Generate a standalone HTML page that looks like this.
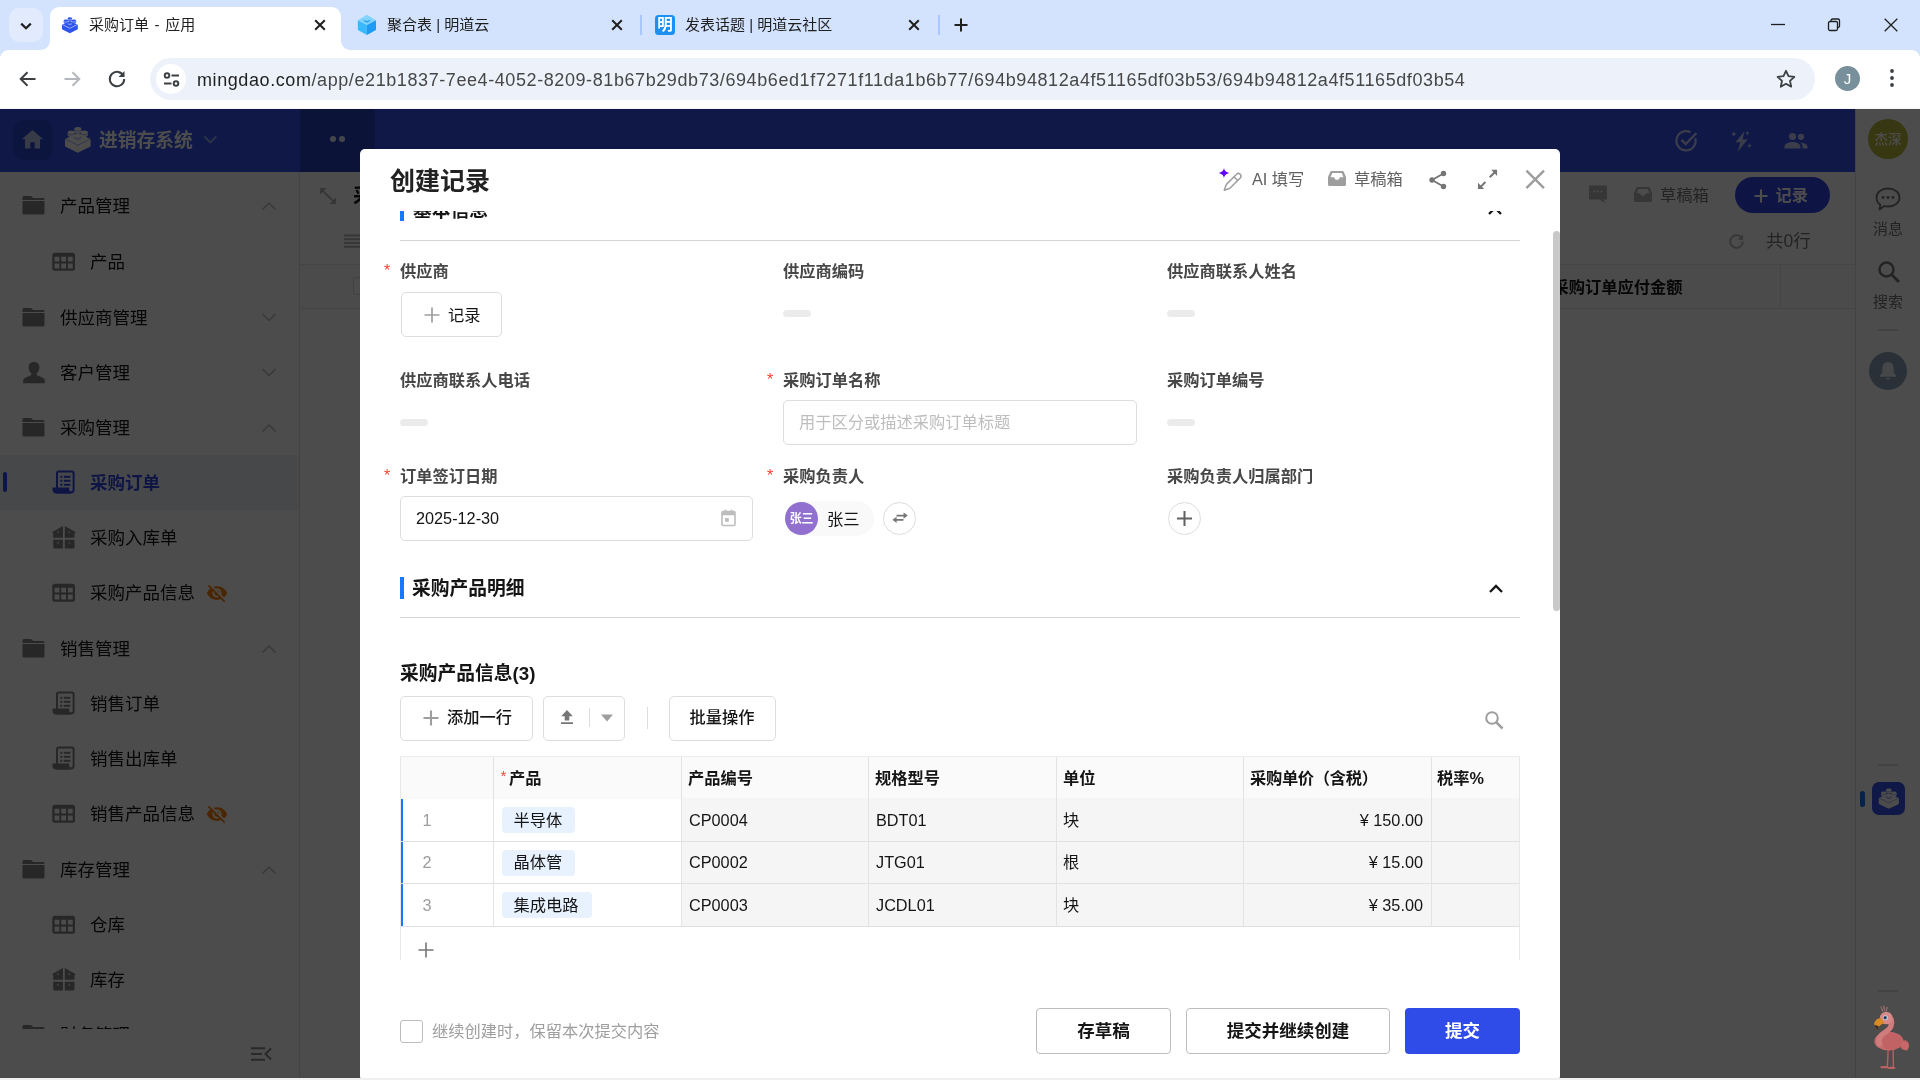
<!DOCTYPE html>
<html lang="zh-CN">
<head>
<meta charset="utf-8">
<title>采购订单 - 应用</title>
<style>
*{box-sizing:border-box;margin:0;padding:0}
html,body{width:1920px;height:1080px;overflow:hidden;background:#f0f0f0}
body{font-family:"Liberation Sans","Noto Sans CJK SC",sans-serif;color:#151515;position:relative}
.abs{position:absolute}
svg{display:block}
/* ---------- browser chrome ---------- */
#tabstrip,#toolbar,#app,#modal{will-change:transform}
#tabstrip{position:absolute;left:0;top:0;width:1920px;height:50px;background:#d3e3fd}
#toolbar{position:absolute;left:0;top:50px;width:1920px;height:58px;background:#fff}
.tabtitle{position:absolute;top:14px;font-size:15px;line-height:22px;color:#1f1f1f;white-space:nowrap}
#omni{position:absolute;left:150px;top:8px;width:1665px;height:42px;border-radius:21px;background:#edf2fa}
#url{position:absolute;left:47px;top:10px;font-size:18px;line-height:24px;color:#1f1f1f;white-space:nowrap;letter-spacing:.585px}
/* ---------- app ---------- */
#app{position:absolute;left:0;top:108px;width:1920px;height:970px;background:#fff;overflow:hidden}
#mask{position:absolute;left:0;top:108px;width:1920px;height:970px;background:rgba(0,0,0,.7)}
#hdr{position:absolute;left:0;top:0;width:1855px;height:64px;background:#3253ea}
#side{position:absolute;left:0;top:64px;width:300px;height:906px;background:#fff;border-right:1px solid #e2e2e2}
.nav{position:absolute;left:0;width:299px;height:55px;font-size:17.5px;line-height:55px;color:#151515;white-space:nowrap}
.nav .t{position:absolute;left:60px;top:1px}
.nav.sub .t{left:90px}
.nav .ic{position:absolute;left:22px;top:16px}
.nav.sub .ic{left:52px}
.nav .chev{position:absolute;left:261px;top:20px}
#rside{position:absolute;left:1855px;top:0;width:65px;height:970px;background:#fff;border-left:1px solid #e0e0e0}
/* ---------- modal ---------- */
#modal{position:absolute;left:360px;top:149px;width:1200px;height:929px;background:#fff;border-radius:5px 5px 1px 1px;overflow:hidden}
.lbl{position:absolute;font-size:16.25px;line-height:24px;font-weight:700;color:#474747;white-space:nowrap}
.req{position:absolute;color:#f44336;font-size:16px;line-height:24px;font-weight:400}
.pill{position:absolute;width:28px;height:7px;border-radius:4px;background:#ebebeb}
.box{position:absolute;border:1px solid #ddd;border-radius:5px;background:#fff}
</style>
</head>
<body>
<!-- ================= BROWSER CHROME ================= -->
<div id="tabstrip">
  <div class="abs" style="left:8.500px;top:8px;width:34px;height:34px;border-radius:10px;background:#e1ebfd"></div>
  <svg class="abs" style="left:17px;top:17px" width="18" height="18" viewBox="0 0 18 18"><path d="M4.2 6.6 9 11.2l4.8-4.6" fill="none" stroke="#1f1f1f" stroke-width="2.2"/></svg>
  <!-- active tab -->
  <svg class="abs" style="left:40px;top:7px" width="312" height="43" viewBox="0 0 312 43"><path d="M0 43c6 0 10-4 10-10V10C10 4 14 0 20 0h271c6 0 10 4 10 10v23c0 6 4 10 10 10z" fill="#fff"/></svg>
  <svg class="abs" style="left:61px;top:16px" width="18" height="18" viewBox="0 0 28 29"><path d="M13.800 8 26.600 14v7.500L13.800 27.800 1 21.500V14z" fill="#2f54eb"/><g fill="#2f54eb"><path d="M10.200 3.900a3.600 1.900 0 0 1 7.200 0v2.600a3.600 1.900 0 0 1-7.200 0z"/><path d="M3.700 7.500a3.600 1.900 0 0 1 7.200 0v2.600a3.600 1.900 0 0 1-7.200 0z"/><path d="M16.700 7.500a3.600 1.900 0 0 1 7.200 0v2.600a3.600 1.900 0 0 1-7.200 0z"/><path d="M10.200 11a3.600 1.900 0 0 1 7.200 0v2.600a3.600 1.900 0 0 1-7.200 0z"/></g><g fill="none" stroke="#fff" stroke-width="1.100" opacity=".75"><path d="M1.800 13.800 13.800 19.800 25.800 13.800"/><path d="M10.400 5a3.600 1.900 0 0 0 6.800 0"/><path d="M3.900 8.600a3.600 1.900 0 0 0 6.800 0"/><path d="M16.900 8.600a3.600 1.900 0 0 0 6.800 0"/><path d="M10.400 12.100a3.600 1.900 0 0 0 6.800 0"/></g></svg>
  <div class="tabtitle" style="left:89px;word-spacing:1.400px">采购订单 - 应用</div>
  <svg class="abs" style="left:312px;top:17px" width="16" height="16" viewBox="0 0 16 16"><path d="M3.200 3.200l9.600 9.600M12.800 3.200l-9.600 9.600" stroke="#1f1f1f" stroke-width="2"/></svg>
  <!-- tab 2 -->
  <svg class="abs" style="left:357px;top:14px" width="20" height="22" viewBox="0 0 20 22"><path d="M9.900.8 19 6.200 9.900 11 .900 6.200z" fill="#82d4ff"/><path d="M.900 6.200 9.900 11v10L.900 16z" fill="#3bb8fe"/><path d="M19 6.200 9.900 11v10L19 16z" fill="#1f9bf4"/><path d="M6.400 5.600c.3 1.700 1.700 2.900 3.500 2.900s3.200-1.200 3.500-2.900c-.9.900-2.100 1.400-3.500 1.400s-2.600-.5-3.500-1.400z" fill="#1f9bf4"/></svg>
  <div class="tabtitle" style="left:387px">聚合表 | 明道云</div>
  <svg class="abs" style="left:609px;top:17px" width="16" height="16" viewBox="0 0 16 16"><path d="M3.200 3.200l9.600 9.600M12.800 3.200l-9.600 9.600" stroke="#1f1f1f" stroke-width="2"/></svg>
  <div class="abs" style="left:640px;top:15px;width:2px;height:20px;background:#a8c7fa"></div>
  <!-- tab 3 -->
  <div class="abs" style="left:655px;top:15px;width:20px;height:20px;border-radius:3.500px;background:#1e90f0;color:#fff;font-size:15.500px;line-height:20px;font-weight:700;text-align:center">明</div>
  <div class="tabtitle" style="left:685px">发表话题 | 明道云社区</div>
  <svg class="abs" style="left:906px;top:17px" width="16" height="16" viewBox="0 0 16 16"><path d="M3.200 3.200l9.600 9.600M12.800 3.200l-9.600 9.600" stroke="#1f1f1f" stroke-width="2"/></svg>
  <div class="abs" style="left:938px;top:15px;width:2px;height:20px;background:#a8c7fa"></div>
  <svg class="abs" style="left:952px;top:16px" width="18" height="18" viewBox="0 0 18 18"><path d="M9 2.500v13M2.500 9h13" stroke="#1f1f1f" stroke-width="2"/></svg>
  <!-- window controls -->
  <svg class="abs" style="left:1768px;top:14.500px" width="20" height="20" viewBox="0 0 20 20"><path d="M3 9.500h14" stroke="#1f1f1f" stroke-width="1.300"/></svg>
  <svg class="abs" style="left:1823.500px;top:14.700px" width="20" height="20" viewBox="0 0 20 20"><rect x="4.500" y="6.500" width="9" height="9" rx="1.500" fill="none" stroke="#1f1f1f" stroke-width="1.300"/><path d="M7 6.500V5.500c0-.8.700-1.500 1.500-1.500H14c.800 0 1.500.700 1.500 1.500V11c0 .8-.7 1.500-1.500 1.500h-.5" fill="none" stroke="#1f1f1f" stroke-width="1.300"/></svg>
  <svg class="abs" style="left:1881.300px;top:14.600px" width="20" height="20" viewBox="0 0 20 20"><path d="M3.700 3.700l12.600 12.600M16.300 3.700l-12.600 12.600" stroke="#1f1f1f" stroke-width="1.300"/></svg>
</div>
<div id="toolbar">
  <div class="abs" style="left:0;top:0;width:8px;height:8px;background:radial-gradient(circle at 100% 100%,#fff 7.500px,#d3e3fd 8px)"></div>
  <div class="abs" style="left:1912px;top:0;width:8px;height:8px;background:radial-gradient(circle at 0 100%,#fff 7.500px,#d3e3fd 8px)"></div>
  <svg class="abs" style="left:16px;top:17px" width="24" height="24" viewBox="0 0 24 24"><path d="M19.500 12H5M11.500 5.200 4.700 12l6.800 6.800" fill="none" stroke="#3c4043" stroke-width="2"/></svg>
  <svg class="abs" style="left:60px;top:17px" width="24" height="24" viewBox="0 0 24 24"><path d="M4.500 12H19M12.500 5.200 19.300 12l-6.800 6.800" fill="none" stroke="#b4b7bb" stroke-width="2"/></svg>
  <svg class="abs" style="left:105px;top:17px" width="24" height="24" viewBox="0 0 24 24"><path d="M18.600 9.200A7.200 7.200 0 1 0 19.200 12" fill="none" stroke="#3c4043" stroke-width="2"/><path d="M19.500 4v6h-6z" fill="#3c4043"/></svg>
  <div id="omni">
    <div class="abs" style="left:6px;top:6px;width:30px;height:30px;border-radius:50%;background:#fff"></div>
    <svg class="abs" style="left:10.500px;top:11px" width="21" height="21" viewBox="0 0 21 21"><g fill="none" stroke="#3c4043" stroke-width="1.900"><circle cx="6" cy="6.500" r="2.300"/><path d="M10.500 6.500H18M3 14.500h7.500"/><circle cx="15" cy="14.500" r="2.300"/></g></svg>
    <div id="url">mingdao.com<span style="color:#474747">/app/e21b1837-7ee4-4052-8209-81b67b29db73/694b6ed1f7271f11da1b6b77/694b94812a4f51165df03b53/694b94812a4f51165df03b54</span></div>
    <svg class="abs" style="left:1623.500px;top:9px" width="24" height="24" viewBox="0 0 24 24"><path d="M12 3.800l2.500 5.400 5.900.7-4.400 4 1.200 5.800L12 16.800l-5.200 2.900L8 13.900l-4.400-4 5.900-.7z" fill="none" stroke="#3c4043" stroke-width="1.800" stroke-linejoin="round"/></svg>
  </div>
  <div class="abs" style="left:1835px;top:16px;width:25px;height:25px;border-radius:50%;background:#78909c;color:#fff;font-size:15px;line-height:25px;text-align:center">J</div>
  <svg class="abs" style="left:1880px;top:16px" width="24" height="24" viewBox="0 0 24 24"><g fill="#3c4043"><circle cx="12" cy="5" r="1.900"/><circle cx="12" cy="12" r="1.900"/><circle cx="12" cy="19" r="1.900"/></g></svg>
</div>

<!-- ================= APP (dimmed) ================= -->
<div id="app">
  <div id="hdr">
    <div class="abs" style="left:300px;top:0;width:75px;height:64px;background:rgba(0,0,0,.2)"></div>
    <div class="abs" style="left:13px;top:12px;width:40px;height:40px;border-radius:11px;background:rgba(0,0,0,.13)"></div>
    <svg class="abs" style="left:21px;top:21px" width="23" height="21" viewBox="0 0 23 21"><path d="M11.500 1 .800 10.200h3.200V19.500h5.300v-6.300h4.400v6.300H19V10.200h3.200z" fill="#fff" opacity=".68"/></svg>
    <svg class="abs" style="left:64px;top:17px" width="28" height="29" viewBox="0 0 28 29"><path d="M13.800 8 26.600 14v7.500L13.800 27.800 1 21.500V14z" fill="#fff"/><path d="M1.600 14.200 13.800 20.200 26 14.200" fill="none" stroke="#3049e6" stroke-width=".9" opacity=".45"/><path d="M13.800 20.200v7" stroke="#3049e6" stroke-width=".6" opacity=".25"/><g fill="#fff"><path d="M10.200 3.900a3.600 1.900 0 0 1 7.200 0v2.600a3.600 1.900 0 0 1-7.200 0z"/><path d="M3.700 7.500a3.600 1.900 0 0 1 7.200 0v2.600a3.600 1.900 0 0 1-7.200 0z"/><path d="M16.700 7.500a3.600 1.900 0 0 1 7.200 0v2.600a3.600 1.900 0 0 1-7.200 0z"/><path d="M10.200 11a3.600 1.900 0 0 1 7.200 0v2.600a3.600 1.900 0 0 1-7.200 0z"/></g><g fill="none" stroke="#3049e6" stroke-width=".8" opacity=".5"><path d="M10.200 4.300a3.600 1.900 0 0 0 7.200 0"/><path d="M3.700 7.900a3.600 1.900 0 0 0 7.200 0"/><path d="M16.700 7.900a3.600 1.900 0 0 0 7.200 0"/><path d="M10.200 11.400a3.600 1.900 0 0 0 7.200 0"/><path d="M10 12.500c0 1.200 1.700 2.400 3.800 2.400s3.800-1.200 3.800-2.400" opacity=".7"/></g></svg>
    <div class="abs" style="left:99px;top:18.500px;font-size:18.750px;line-height:28px;font-weight:700;color:#fff;white-space:nowrap">进销存系统</div>
    <svg class="abs" style="left:202px;top:24px" width="16" height="16" viewBox="0 0 16 16"><path d="M2.300 4.400l6 6 6-6" fill="none" stroke="#fff" stroke-width="2" opacity=".5"/></svg>
    <div class="abs" style="left:330px;top:28px;width:6px;height:6px;border-radius:50%;background:#fff;opacity:.9"></div>
    <div class="abs" style="left:339px;top:28px;width:6px;height:6px;border-radius:50%;background:#fff;opacity:.9"></div>
    <svg class="abs" style="left:1673px;top:20px;opacity:.72" width="26" height="26" viewBox="0 0 26 26"><path d="M22.300 10.300A9.600 9.600 0 1 1 17.500 4.300" fill="none" stroke="#fff" stroke-width="2.200"/><path d="M8.500 11.800l4.200 4.300L23.500 5" fill="none" stroke="#fff" stroke-width="2.400"/></svg>
    <svg class="abs" style="left:1728px;top:20px;opacity:.72" width="26" height="26" viewBox="0 0 26 26"><g fill="#fff"><path d="M16.500 3.200 7.500 14.300h4.800L9.800 23.800 19.500 11.500h-5z"/><path d="M5.800 3.300l.8 2 2 .8-2 .8-.8 2-.8-2-2-.8 2-.8zM19.500 2.800l.7 1.600 1.600.7-1.600.7-.7 1.600-.7-1.600-1.600-.7 1.600-.7zM21.500 15.300l.7 1.700 1.700.7-1.700.7-.7 1.700-.7-1.700-1.700-.7 1.700-.7z"/></g></svg>
    <svg class="abs" style="left:1783px;top:20px;opacity:.72" width="26" height="26" viewBox="0 0 26 26"><g fill="#fff"><circle cx="9.500" cy="8.500" r="3.600"/><circle cx="18" cy="8.800" r="3.100"/><path d="M1.500 20.500v-2c0-3 5.300-4.400 8-4.400s8 1.400 8 4.400v2zM19.500 20.500v-2.200c0-1.700-.9-3-2.200-3.900 2.900.2 7.200 1.500 7.200 4.100v2z"/></g></svg>
  </div>
  <div id="side"><div class="abs" style="left:0;top:0;width:299px;height:857px;overflow:hidden">
    <div class="nav" style="top:5.5px"><svg class="ic" width="24" height="24" viewBox="0 0 24 24"><path d="M2.200 1.900h6.800l2.200 2.200h9.600c1 0 1.700.7 1.700 1.700v.3H.500V3.600c0-1 .7-1.700 1.700-1.700z" fill="#828282"/><path d="M.500 7h22v11.900c0 1-.7 1.700-1.700 1.700H2.200c-1 0-1.700-.7-1.700-1.700z" fill="#828282"/></svg><span class="t">产品管理</span><svg class="chev" width="16" height="16" viewBox="0 0 16 16"><path d="M1.500 11.500l6.500-6.500 6.500 6.500" fill="none" stroke="#bdbdbd" stroke-width="1.500"/></svg></div>
    <div class="nav sub" style="top:61.5px"><svg class="ic" width="24" height="24" viewBox="0 0 24 24" style="top:15px"><path d="M2.800 3.750h17.700a2.500 2.500 0 0 1 2.500 2.500v12.950a2.500 2.500 0 0 1-2.500 2.500H2.800a2.500 2.500 0 0 1-2.500-2.500V6.250a2.500 2.500 0 0 1 2.500-2.500zM2.600 7.700v4.800h4.800V7.700zM9.250 7.700v4.800h4.800V7.700zM15.900 7.700v4.800h4.800V7.700zM2.600 14.600v4.800h4.800v-4.800zM9.250 14.600v4.800h4.800v-4.800zM15.900 14.600v4.800h4.800v-4.800z" fill="#828282" fill-rule="evenodd"/></svg><span class="t">产品</span></div>
    <div class="nav" style="top:117.5px"><svg class="ic" width="24" height="24" viewBox="0 0 24 24"><path d="M2.200 1.900h6.800l2.200 2.200h9.600c1 0 1.700.7 1.700 1.700v.3H.500V3.600c0-1 .7-1.700 1.700-1.700z" fill="#828282"/><path d="M.500 7h22v11.900c0 1-.7 1.700-1.700 1.700H2.200c-1 0-1.700-.7-1.700-1.700z" fill="#828282"/></svg><span class="t">供应商管理</span><svg class="chev" width="16" height="16" viewBox="0 0 16 16"><path d="M1.500 4l6.500 6.500 6.500-6.500" fill="none" stroke="#bdbdbd" stroke-width="1.500"/></svg></div>
    <div class="nav" style="top:172.5px"><svg class="ic" width="26" height="26" viewBox="0 0 24 24" preserveAspectRatio="none" style="left:21px;top:15px"><path d="M12 1.500c2.900 0 5 2.300 5 5.300 0 2.400-1.200 4.800-2.600 5.900v1.200l5.600 2.400c1.300.6 2 1.700 2 3v2.200H2v-2.200c0-1.300.7-2.400 2-3l5.600-2.400v-1.200C8.200 11.600 7 9.200 7 6.800c0-3 2.100-5.300 5-5.300z" fill="#828282"/></svg><span class="t">客户管理</span><svg class="chev" width="16" height="16" viewBox="0 0 16 16"><path d="M1.500 4l6.500 6.500 6.500-6.500" fill="none" stroke="#bdbdbd" stroke-width="1.500"/></svg></div>
    <div class="nav" style="top:227.5px"><svg class="ic" width="24" height="24" viewBox="0 0 24 24"><path d="M2.200 1.900h6.800l2.200 2.200h9.600c1 0 1.700.7 1.700 1.700v.3H.500V3.600c0-1 .7-1.700 1.700-1.700z" fill="#828282"/><path d="M.500 7h22v11.900c0 1-.7 1.700-1.700 1.700H2.200c-1 0-1.700-.7-1.700-1.700z" fill="#828282"/></svg><span class="t">采购管理</span><svg class="chev" width="16" height="16" viewBox="0 0 16 16"><path d="M1.500 11.500l6.500-6.500 6.500 6.500" fill="none" stroke="#bdbdbd" stroke-width="1.500"/></svg></div>
    <div class="nav sub" style="top:282.5px;background:#eef0f9"><div class="abs" style="left:3px;top:17.5px;width:3.500px;height:20px;border-radius:2px;background:#3049e6"></div><svg class="ic" width="24" height="26" viewBox="0 0 24 26" style="top:14px"><g fill="none" stroke="#3049e6" stroke-width="2"><path d="M5 19V4.300c0-1 .8-1.800 1.800-1.800h13c1 0 1.800.8 1.800 1.800v16.400c0 1.600-1.300 2.800-2.800 2.800H4.200"/><path d="M1.500 19.500h14.700v1.300c0 1.500 1.100 2.700 2.600 2.700H4.300c-1.500 0-2.800-1.200-2.800-2.700z" fill="#3049e6"/></g><g fill="#3049e6"><rect x="8.300" y="6.800" width="2" height="2"/><rect x="11.800" y="6.800" width="6.600" height="2"/><rect x="8.300" y="10.800" width="2" height="2"/><rect x="11.800" y="10.800" width="6.600" height="2"/><rect x="8.300" y="14.800" width="2" height="2"/><rect x="11.800" y="14.800" width="6.600" height="2"/></g></svg><span class="t" style="color:#3049e6;font-weight:700">采购订单</span></div>
    <div class="nav sub" style="top:337.5px"><svg class="ic" width="24" height="28" viewBox="0 0 24 28" style="top:12px"><g fill="#828282"><path d="M10.900 3.900.300 10.100V11h.900v4.700h9.700z"/><path d="M12.800 3.900l10.600 6.200V11h-.9v4.700h-9.700z"/><path d="M1.200 17.750h9.700v8.750H2.700a1.500 1.500 0 0 1-1.500-1.500zM12.800 17.750h9.700V25a1.500 1.500 0 0 1-1.500 1.500h-8.200z"/></g><g fill="#fff" opacity=".55"><rect x="4.900" y="9.200" width="2" height="2"/><rect x="16.300" y="9.200" width="2" height="2"/><rect x="4.900" y="19.800" width="2" height="2"/><rect x="16.300" y="19.800" width="2" height="2"/></g></svg><span class="t">采购入库单</span></div>
    <div class="nav sub" style="top:392.5px"><svg class="ic" width="24" height="24" viewBox="0 0 24 24" style="top:15px"><path d="M2.800 3.750h17.700a2.500 2.500 0 0 1 2.500 2.500v12.950a2.500 2.500 0 0 1-2.500 2.500H2.800a2.500 2.500 0 0 1-2.500-2.500V6.250a2.500 2.500 0 0 1 2.500-2.500zM2.600 7.700v4.800h4.800V7.700zM9.250 7.700v4.800h4.800V7.700zM15.900 7.700v4.800h4.800V7.700zM2.600 14.600v4.800h4.800v-4.800zM9.250 14.600v4.800h4.800v-4.800zM15.900 14.600v4.800h4.800v-4.800z" fill="#828282" fill-rule="evenodd"/></svg><span class="t">采购产品信息</span><svg class="abs" style="left:206px;top:17px" width="22" height="22" viewBox="0 0 24 24"><path d="M12 7c2.760 0 5 2.240 5 5 0 .65-.13 1.260-.36 1.830l2.920 2.920c1.510-1.260 2.700-2.890 3.430-4.750-1.730-4.390-6-7.500-11-7.500-1.400 0-2.740.25-3.980.7l2.160 2.160C10.740 7.130 11.350 7 12 7zM2 4.270l2.280 2.280.46.460C3.080 8.300 1.780 10.020 1 12c1.730 4.390 6 7.500 11 7.500 1.550 0 3.030-.3 4.380-.84l.42.420L19.730 22 21 20.730 3.270 3 2 4.270zM7.530 9.800l1.550 1.550c-.05.210-.08.430-.08.650 0 1.660 1.340 3 3 3 .22 0 .44-.03.650-.08l1.550 1.550c-.67.330-1.410.530-2.200.530-2.760 0-5-2.240-5-5 0-.79.200-1.530.530-2.200zm4.310-.78 3.150 3.150.02-.16c0-1.660-1.340-3-3-3l-.17.010z" fill="#f57c00"/></svg></div>
    <div class="nav" style="top:448.5px"><svg class="ic" width="24" height="24" viewBox="0 0 24 24"><path d="M2.200 1.900h6.800l2.200 2.200h9.600c1 0 1.700.7 1.700 1.700v.3H.500V3.600c0-1 .7-1.700 1.700-1.700z" fill="#828282"/><path d="M.500 7h22v11.900c0 1-.7 1.700-1.700 1.700H2.200c-1 0-1.700-.7-1.700-1.700z" fill="#828282"/></svg><span class="t">销售管理</span><svg class="chev" width="16" height="16" viewBox="0 0 16 16"><path d="M1.500 11.500l6.500-6.500 6.500 6.500" fill="none" stroke="#bdbdbd" stroke-width="1.500"/></svg></div>
    <div class="nav sub" style="top:503.5px"><svg class="ic" width="24" height="26" viewBox="0 0 24 26" style="top:14px"><g fill="none" stroke="#828282" stroke-width="2"><path d="M5 19V4.300c0-1 .8-1.800 1.800-1.800h13c1 0 1.800.8 1.800 1.800v16.400c0 1.600-1.300 2.800-2.800 2.800H4.200"/><path d="M1.500 19.500h14.700v1.300c0 1.500 1.100 2.700 2.600 2.700H4.300c-1.500 0-2.800-1.200-2.800-2.700z" fill="#828282"/></g><g fill="#828282"><rect x="8.300" y="6.800" width="2" height="2"/><rect x="11.800" y="6.800" width="6.600" height="2"/><rect x="8.300" y="10.800" width="2" height="2"/><rect x="11.800" y="10.800" width="6.600" height="2"/><rect x="8.300" y="14.800" width="2" height="2"/><rect x="11.800" y="14.800" width="6.600" height="2"/></g></svg><span class="t">销售订单</span></div>
    <div class="nav sub" style="top:558.5px"><svg class="ic" width="24" height="26" viewBox="0 0 24 26" style="top:14px"><g fill="none" stroke="#828282" stroke-width="2"><path d="M5 19V4.300c0-1 .8-1.800 1.800-1.800h13c1 0 1.800.8 1.800 1.800v16.400c0 1.600-1.300 2.800-2.800 2.800H4.200"/><path d="M1.500 19.500h14.700v1.300c0 1.500 1.100 2.700 2.600 2.700H4.300c-1.500 0-2.800-1.200-2.800-2.700z" fill="#828282"/></g><g fill="#828282"><rect x="8.300" y="6.800" width="2" height="2"/><rect x="11.800" y="6.800" width="6.600" height="2"/><rect x="8.300" y="10.800" width="2" height="2"/><rect x="11.800" y="10.800" width="6.600" height="2"/><rect x="8.300" y="14.800" width="2" height="2"/><rect x="11.800" y="14.800" width="6.600" height="2"/></g></svg><span class="t">销售出库单</span></div>
    <div class="nav sub" style="top:613.5px"><svg class="ic" width="24" height="24" viewBox="0 0 24 24" style="top:15px"><path d="M2.800 3.750h17.700a2.500 2.500 0 0 1 2.500 2.500v12.950a2.500 2.500 0 0 1-2.500 2.500H2.800a2.500 2.500 0 0 1-2.500-2.500V6.250a2.500 2.500 0 0 1 2.500-2.500zM2.600 7.700v4.800h4.800V7.700zM9.250 7.700v4.800h4.800V7.700zM15.900 7.700v4.800h4.800V7.700zM2.600 14.600v4.800h4.800v-4.800zM9.250 14.600v4.800h4.800v-4.800zM15.900 14.600v4.800h4.800v-4.800z" fill="#828282" fill-rule="evenodd"/></svg><span class="t">销售产品信息</span><svg class="abs" style="left:206px;top:17px" width="22" height="22" viewBox="0 0 24 24"><path d="M12 7c2.760 0 5 2.240 5 5 0 .65-.13 1.260-.36 1.830l2.920 2.920c1.510-1.260 2.700-2.890 3.430-4.750-1.730-4.390-6-7.500-11-7.500-1.400 0-2.740.25-3.980.7l2.160 2.160C10.740 7.130 11.350 7 12 7zM2 4.270l2.280 2.280.46.460C3.080 8.300 1.780 10.020 1 12c1.730 4.390 6 7.500 11 7.500 1.550 0 3.030-.3 4.380-.84l.42.420L19.730 22 21 20.730 3.270 3 2 4.270zM7.530 9.800l1.550 1.550c-.05.210-.08.430-.08.650 0 1.660 1.340 3 3 3 .22 0 .44-.03.650-.08l1.550 1.550c-.67.330-1.410.530-2.200.530-2.760 0-5-2.240-5-5 0-.79.200-1.530.530-2.200zm4.310-.78 3.150 3.150.02-.16c0-1.660-1.340-3-3-3l-.17.010z" fill="#f57c00"/></svg></div>
    <div class="nav" style="top:669.5px"><svg class="ic" width="24" height="24" viewBox="0 0 24 24"><path d="M2.200 1.900h6.800l2.200 2.200h9.600c1 0 1.700.7 1.700 1.700v.3H.500V3.600c0-1 .7-1.700 1.700-1.700z" fill="#828282"/><path d="M.500 7h22v11.900c0 1-.7 1.700-1.700 1.700H2.200c-1 0-1.700-.7-1.700-1.700z" fill="#828282"/></svg><span class="t">库存管理</span><svg class="chev" width="16" height="16" viewBox="0 0 16 16"><path d="M1.500 11.500l6.500-6.500 6.500 6.500" fill="none" stroke="#bdbdbd" stroke-width="1.500"/></svg></div>
    <div class="nav sub" style="top:724.5px"><svg class="ic" width="24" height="24" viewBox="0 0 24 24" style="top:15px"><path d="M2.800 3.750h17.700a2.500 2.500 0 0 1 2.500 2.500v12.950a2.500 2.500 0 0 1-2.500 2.500H2.800a2.500 2.500 0 0 1-2.500-2.500V6.250a2.500 2.500 0 0 1 2.500-2.500zM2.600 7.700v4.800h4.800V7.700zM9.250 7.700v4.800h4.800V7.700zM15.900 7.700v4.800h4.800V7.700zM2.600 14.600v4.800h4.800v-4.800zM9.250 14.600v4.800h4.800v-4.800zM15.900 14.600v4.800h4.800v-4.800z" fill="#828282" fill-rule="evenodd"/></svg><span class="t">仓库</span></div>
    <div class="nav sub" style="top:779.5px"><svg class="ic" width="24" height="28" viewBox="0 0 24 28" style="top:12px"><g fill="#828282"><path d="M10.900 3.900.300 10.100V11h.900v4.700h9.700z"/><path d="M12.800 3.900l10.600 6.200V11h-.9v4.700h-9.700z"/><path d="M1.200 17.750h9.700v8.750H2.700a1.500 1.500 0 0 1-1.500-1.500zM12.800 17.750h9.700V25a1.500 1.500 0 0 1-1.500 1.500h-8.200z"/></g><g fill="#fff" opacity=".55"><rect x="4.900" y="9.200" width="2" height="2"/><rect x="16.300" y="9.200" width="2" height="2"/><rect x="4.900" y="19.800" width="2" height="2"/><rect x="16.300" y="19.800" width="2" height="2"/></g></svg><span class="t">库存</span></div>
    <div class="nav" style="top:834.5px"><svg class="ic" width="24" height="24" viewBox="0 0 24 24"><path d="M2.200 1.900h6.800l2.200 2.200h9.600c1 0 1.700.7 1.700 1.700v.3H.500V3.600c0-1 .7-1.700 1.700-1.700z" fill="#828282"/><path d="M.500 7h22v11.900c0 1-.7 1.700-1.700 1.700H2.200c-1 0-1.700-.7-1.700-1.700z" fill="#828282"/></svg><span class="t">财务管理</span><svg class="chev" width="16" height="16" viewBox="0 0 16 16"><path d="M1.500 11.500l6.500-6.500 6.500 6.500" fill="none" stroke="#bdbdbd" stroke-width="1.500"/></svg></div>
  </div>
  <svg class="abs" style="left:249px;top:870px" width="24" height="24" viewBox="0 0 24 24"><path d="M2 6.200h14M2 12h11M2 17.800h14" stroke="#8a8a8a" stroke-width="2"/><path d="M22 6.500 16.500 12l5.500 5.500" fill="none" stroke="#8a8a8a" stroke-width="2"/></svg>
  </div>
  <div id="main" class="abs" style="left:300px;top:64px;width:1555px;height:906px;background:#fff">
    <svg class="abs" style="left:17px;top:12.500px" width="22" height="22" viewBox="0 0 22 22"><path d="M5 5l12 12" fill="none" stroke="#b5b5b5" stroke-width="1.800"/><path d="M3 3h6.500L3 9.500zM19 19h-6.500L19 12.500z" fill="#b5b5b5"/></svg>
    <div class="abs" style="left:53px;top:10px;font-size:20px;line-height:28px;font-weight:700;color:#151515;white-space:nowrap">采购订单</div>
    <svg class="abs" style="left:1287px;top:11px" width="22" height="22" viewBox="0 0 22 22"><path d="M2 2.500h18v14h-4l2.500 4-6-4H2z" fill="#b5b5b5"/><g fill="#fff"><circle cx="7.500" cy="8.500" r="1"/><circle cx="11" cy="8.500" r="1"/><circle cx="14.500" cy="8.500" r="1"/></g></svg>
    <svg class="abs" style="left:1334px;top:15px" width="18" height="15" viewBox="0 0 18 15"><path d="M3.300 0h11.400c.4 0 .8.300 1 .7L18 6v7.500c0 .8-.7 1.500-1.500 1.500h-15C.700 15 0 14.300 0 13.500V6L2.300.7c.2-.4.600-.7 1-.7zM4.300 2 2.500 6.200h3.600c.2 1.500 1.400 2.600 2.900 2.600s2.700-1.100 2.900-2.600h3.600L13.700 2z" fill="#b5b5b5" fill-rule="evenodd"/></svg>
    <div class="abs" style="left:1360px;top:10px;font-size:16.250px;line-height:26px;color:#757575;white-space:nowrap">草稿箱</div>
    <div class="abs" style="left:1435px;top:5px;width:95px;height:36px;border-radius:18px;background:#3049e6"></div>
    <svg class="abs" style="left:1454px;top:16.500px" width="14" height="14" viewBox="0 0 14 14"><path d="M7 .5v13M.500 7h13" stroke="#fff" stroke-width="2.100"/></svg>
    <div class="abs" style="left:1475.500px;top:9.500px;font-size:16.250px;line-height:26px;font-weight:700;color:#fff;white-space:nowrap">记录</div>
    <svg class="abs" style="left:42px;top:59px" width="20" height="20" viewBox="0 0 20 20"><path d="M2 4.600h16M2 8.300h16M2 12h16M2 15.800h16" stroke="#b5b5b5" stroke-width="2"/></svg>
    <svg class="abs" style="left:1426px;top:59px" width="21" height="21" viewBox="0 0 24 24"><path d="M18.600 9.200A7.200 7.200 0 1 0 19.200 12" fill="none" stroke="#b5b5b5" stroke-width="2"/><path d="M19.500 4v6h-6z" fill="#b5b5b5"/></svg>
    <div class="abs" style="left:1466px;top:56px;font-size:17.500px;line-height:26px;color:#757575;white-space:nowrap">共0行</div>
    <div class="abs" style="left:0;top:92px;width:1555px;height:1px;background:#e8e8e8"></div>
    <div class="abs" style="left:0;top:93px;width:1555px;height:43px;background:#fafafa"></div>
    <div class="abs" style="left:53px;top:105px;width:18px;height:18px;border:1px solid #d6d6d6;border-radius:3px;background:#fff"></div>
    <div class="abs" style="left:1252.500px;top:102px;font-size:16.250px;line-height:26px;font-weight:700;color:#151515;white-space:nowrap">采购订单应付金额</div>
    <div class="abs" style="left:1480px;top:93px;width:1px;height:43px;background:#e6e6e6"></div>
    <div class="abs" style="left:0;top:136px;width:1555px;height:1px;background:#e6e6e6"></div>
  </div>
  <div id="rside">
    <div class="abs" style="left:12px;top:11px;width:40px;height:40px;border-radius:50%;background:#b8b83c;color:#fff;font-size:13.500px;font-weight:500;line-height:42px;text-align:center;white-space:nowrap">杰深</div>
    <svg class="abs" style="left:18px;top:76.500px" width="28" height="28" viewBox="0 0 28 28"><path d="M14 3.500c6.400 0 11.500 3.800 11.500 9s-5.100 9-11.500 9c-1.300 0-2.500-.2-3.700-.4L5.500 24.500l.8-4.700C3.900 18.100 2.500 15.500 2.500 12.500c0-5.200 5.100-9 11.500-9z" fill="none" stroke="#757575" stroke-width="1.800" stroke-linejoin="round"/><g fill="#757575"><circle cx="9" cy="12.500" r="1.400"/><circle cx="14" cy="12.500" r="1.400"/><circle cx="19" cy="12.500" r="1.400"/></g></svg>
    <div class="abs" style="left:0;top:111px;width:64px;font-size:15px;line-height:20px;color:#757575;text-align:center">消息</div>
    <svg class="abs" style="left:20px;top:151px" width="26" height="26" viewBox="0 0 26 26"><circle cx="10.500" cy="10.500" r="7" fill="none" stroke="#757575" stroke-width="2.400"/><path d="M15.800 15.800 23 23" stroke="#757575" stroke-width="2.800"/></svg>
    <div class="abs" style="left:0;top:184px;width:64px;font-size:15px;line-height:20px;color:#757575;text-align:center">搜索</div>
    <div class="abs" style="left:22px;top:221px;width:20px;height:1.500px;background:#dcdcdc"></div>
    <div class="abs" style="left:13px;top:244px;width:38px;height:38px;border-radius:50%;background:#8aa2ba"></div>
    <svg class="abs" style="left:21px;top:252px" width="22" height="22" viewBox="0 0 22 22"><path d="M11 2c-3.300 0-5.700 2.600-5.700 6v4.500L3 15.500v1.200h16v-1.200l-2.300-3V8c0-3.400-2.400-6-5.700-6zM8.800 18c.3 1 1.200 1.600 2.200 1.600s1.900-.6 2.200-1.600z" fill="#e8edf1"/></svg>
    <div class="abs" style="left:22px;top:656px;width:20px;height:1.500px;background:#dcdcdc"></div>
    <div class="abs" style="left:4px;top:683px;width:5px;height:15.500px;border-radius:2.500px;background:#1677ff"></div>
    <div class="abs" style="left:16px;top:674px;width:32.500px;height:33px;border-radius:7px;background:#3253ea"></div>
    <svg class="abs" style="left:21.500px;top:679px" width="22" height="22.800" viewBox="0 0 28 29"><path d="M13.800 8 26.600 14v7.500L13.800 27.800 1 21.500V14z" fill="#fff"/><path d="M1.600 14.200 13.800 20.200 26 14.200" fill="none" stroke="#3253ea" stroke-width="1" opacity=".5"/><g fill="#fff"><path d="M10.200 3.900a3.600 1.900 0 0 1 7.200 0v2.600a3.600 1.900 0 0 1-7.200 0z"/><path d="M3.700 7.500a3.600 1.900 0 0 1 7.200 0v2.600a3.600 1.900 0 0 1-7.200 0z"/><path d="M16.700 7.500a3.600 1.900 0 0 1 7.200 0v2.600a3.600 1.900 0 0 1-7.200 0z"/><path d="M10.200 11a3.600 1.900 0 0 1 7.200 0v2.600a3.600 1.900 0 0 1-7.200 0z"/></g><g fill="none" stroke="#3253ea" stroke-width=".9" opacity=".5"><path d="M10.200 4.300a3.600 1.900 0 0 0 7.200 0"/><path d="M3.700 7.900a3.600 1.900 0 0 0 7.200 0"/><path d="M16.700 7.900a3.600 1.900 0 0 0 7.200 0"/><path d="M10.200 11.400a3.600 1.900 0 0 0 7.200 0"/><path d="M10 12.500c0 1.200 1.700 2.400 3.800 2.400s3.800-1.200 3.800-2.400"/></g></svg>
    <div class="abs" style="left:22px;top:882px;width:20px;height:1.500px;background:#dcdcdc"></div>
    
  </div>
</div>
<div id="mask"></div>
<div class="abs" style="left:0;top:108px;width:1920px;height:1px;background:#f4f6fa"></div>
<svg class="abs" style="left:1850px;top:980px" width="70" height="100" viewBox="0 0 70 100">
  <g fill="none" stroke="#cf8685" stroke-width=".8" stroke-linecap="round"><path d="M32.500 31c-.3-1.800-.8-3-1.600-4.200M34.200 30.300c.1-1.800 0-3-.4-4.300M36 31c.7-1.400 1-2.400 1.200-3.600"/></g>
  <ellipse cx="54.600" cy="65.300" rx="4.300" ry="5" fill="#bb5c5e"/>
  <path d="M51.500 63c2.500-2.500 6.500-1.500 7.300 1.800.5 2.300-1 5.200-2.300 5.800-1.500-.5-3.800-1.500-5-3z" fill="#c4686a"/>
  <g stroke="#b85f61" stroke-width="1.400" stroke-linecap="round" fill="none"><path d="M38.200 69.500 37.300 87"/><path d="M43.200 69.500 43.300 87.500"/></g>
  <ellipse cx="34.300" cy="87.200" rx="4.200" ry="1.150" fill="#bd6365"/><ellipse cx="41.300" cy="87.900" rx="4.200" ry="1.150" fill="#bd6365"/>
  <ellipse cx="38.900" cy="61.200" rx="14.500" ry="9.400" fill="#c66a6c"/>
  <path d="M30 56c6-4.500 17-4.500 21.500 1.500 1.800 3.500.5 8-3.500 10.500-5 2.500-11 2-14-.5" fill="#bf6063" opacity=".75"/>
  <path d="M41.200 39.500c1.500 5.500-.5 9.500-6.200 12.800-5 3-7.500 6.500-5.500 11.500" fill="none" stroke="#cf7c7c" stroke-width="5.400" stroke-linecap="round"/>
  <circle cx="36.200" cy="38" r="6.300" fill="#d58a89"/>
  <path d="M31.200 38.300c-3.600-.6-6.600 2.200-7.200 6.200l3.400 6.200c.8-3.600 2.800-6 7-7.600z" fill="#d88a23"/>
  <path d="M24 44.500 27.400 50.700 28.900 46.200c-1.500-.2-3.300-.8-4.900-1.700z" fill="#3b2b28"/>
  <circle cx="35.400" cy="37.800" r="2.500" fill="#c9d3e2"/><circle cx="35.200" cy="37.800" r="1.700" fill="#2d5179"/><circle cx="35.100" cy="37.800" r=".8" fill="#16202e"/>
</svg>

<!-- ================= MODAL ================= -->
<div id="modal">
  <div class="abs" style="left:30px;top:14px;font-size:25px;line-height:36px;font-weight:700;color:#222;white-space:nowrap">创建记录</div>
  <svg class="abs" style="left:857px;top:17px" width="28" height="28" viewBox="0 0 28 28"><path d="M7 1.800C7.400 4.600 8.400 5.600 12.200 7 8.400 8.400 7.400 9.400 7 12.200 6.600 9.400 5.600 8.400 1.800 7 5.600 5.600 6.600 4.600 7 1.800z" fill="#6200ff"/><g transform="translate(15.300 16.200) rotate(45)" fill="none" stroke="#9e9e9e" stroke-width="1.500" stroke-linejoin="round"><path d="M-2.600 -8.600a2.600 2.600 0 0 1 5.200 0V6L0 11.300-2.600 6z"/><path d="M-2.600 -5h5.200"/></g></svg>
  <div class="abs" style="left:892px;top:18px;font-size:16.250px;line-height:24px;color:#616161;white-space:nowrap">AI 填写</div>
  <svg class="abs" style="left:967.5px;top:22px" width="18" height="15" viewBox="0 0 18 15"><path d="M3.300 0h11.400c.4 0 .8.300 1 .7L18 6v7.500c0 .8-.7 1.500-1.500 1.500h-15C.700 15 0 14.300 0 13.500V6L2.300.7c.2-.4.600-.7 1-.7zM4.300 2 2.500 6.200h3.600c.2 1.500 1.400 2.600 2.900 2.600s2.700-1.100 2.900-2.600h3.600L13.700 2z" fill="#9e9e9e" fill-rule="evenodd"/></svg>
  <div class="abs" style="left:994px;top:18px;font-size:16.250px;line-height:24px;color:#616161;white-space:nowrap">草稿箱</div>
  <svg class="abs" style="left:1066.5px;top:20px" width="22" height="22" viewBox="0 0 22 22"><g fill="#757575"><circle cx="16.500" cy="4.500" r="2.700"/><circle cx="5" cy="11" r="2.700"/><circle cx="16.500" cy="17.500" r="2.700"/></g><path d="M16.500 4.500 5 11l11.500 6.500" fill="none" stroke="#757575" stroke-width="1.800"/></svg>
  <svg class="abs" style="left:1116px;top:19px" width="22" height="22" viewBox="0 0 22 22"><path d="M13.700 9.300l5.100-5.100M9.400 14l-5.100 5.100" fill="none" stroke="#757575" stroke-width="2"/><path d="M15.200 1.850h5.900V8.100zM1.950 14.700V21H8.200z" fill="#757575"/></svg>
  <svg class="abs" style="left:1164px;top:19px" width="22" height="22" viewBox="0 0 22 22"><path d="M2.400 2.600l17.600 17.600M20 2.600 2.400 20.200" stroke="#9e9e9e" stroke-width="2.500"/></svg>
  <div class="abs" style="left:0;top:62px;width:1200px;height:749px;overflow:hidden">
  <div class="abs" style="left:40px;top:-12.5px;width:4px;height:22px;background:#1677ff"></div>
  <div class="abs" style="left:53px;top:-13px;font-size:18.750px;line-height:26px;font-weight:700;color:#151515;white-space:nowrap">基本信息</div>
  <svg class="abs" style="left:1126px;top:-9px" width="18" height="18" viewBox="0 0 18 18"><path d="M3 12l6-6 6 6" fill="none" stroke="#151515" stroke-width="2.300"/></svg>
  <div class="abs" style="left:40px;top:29px;width:1120px;height:1px;background:#d4d4d4"></div>
  <div class="req" style="left:24px;top:48px">*</div>
  <div class="lbl" style="left:40px;top:48px">供应商</div>
  <div class="lbl" style="left:423px;top:48px">供应商编码</div>
  <div class="lbl" style="left:807px;top:48px">供应商联系人姓名</div>
  <div class="box" style="left:41px;top:81px;width:101px;height:45px"></div>
  <svg class="abs" style="left:64px;top:96px" width="16" height="16" viewBox="0 0 16 16"><path d="M8 .5v15M.500 8h15" stroke="#9e9e9e" stroke-width="1.700"/></svg>
  <div class="abs" style="left:88px;top:91px;font-size:16.250px;line-height:26px;color:#151515;white-space:nowrap">记录</div>
  <div class="pill" style="left:423px;top:99px"></div>
  <div class="pill" style="left:807px;top:99px"></div>
  <div class="lbl" style="left:40px;top:157px">供应商联系人电话</div>
  <div class="req" style="left:407px;top:157px">*</div>
  <div class="lbl" style="left:423px;top:157px">采购订单名称</div>
  <div class="lbl" style="left:807px;top:157px">采购订单编号</div>
  <div class="pill" style="left:40px;top:208px"></div>
  <div class="box" style="left:423px;top:189px;width:354px;height:45px"></div>
  <div class="abs" style="left:439px;top:198px;font-size:16.250px;line-height:26px;color:#bdbdbd;white-space:nowrap">用于区分或描述采购订单标题</div>
  <div class="pill" style="left:807px;top:208px"></div>
  <div class="req" style="left:24px;top:253px">*</div>
  <div class="lbl" style="left:40px;top:253px">订单签订日期</div>
  <div class="req" style="left:407px;top:253px">*</div>
  <div class="lbl" style="left:423px;top:253px">采购负责人</div>
  <div class="lbl" style="left:807px;top:253px">采购负责人归属部门</div>
  <div class="box" style="left:40px;top:285px;width:353px;height:45px"></div>
  <div class="abs" style="left:56px;top:294px;font-size:16.250px;line-height:26px;color:#151515;white-space:nowrap">2025-12-30</div>
  <svg class="abs" style="left:360px;top:298px" width="17" height="18" viewBox="0 0 17 18"><path d="M3 2.500h11c.6 0 1 .4 1 1v12c0 .6-.4 1-1 1H3c-.6 0-1-.4-1-1v-12c0-.6.400-1 1-1z" fill="none" stroke="#bdbdbd" stroke-width="1.600"/><path d="M2 3h13v3.200H2zM4.500.8h1.800v2.700H4.500zM10.700.8h1.800v2.700h-1.800zM5 9h3.800v3.800H5z" fill="#bdbdbd"/></svg>
  <div class="abs" style="left:425px;top:290px;width:89px;height:35px;border-radius:18px;background:#f9f9f9"></div>
  <div class="abs" style="left:425px;top:290.5px;width:33px;height:33px;border-radius:50%;background:#9170cf;color:#fff;font-size:12px;font-weight:700;line-height:35px;text-align:center;white-space:nowrap;letter-spacing:-.2px">张三</div>
  <div class="abs" style="left:467px;top:295px;font-size:16.250px;line-height:26px;color:#151515;white-space:nowrap">张三</div>
  <div class="abs" style="left:523px;top:291px;width:33px;height:33px;border-radius:50%;border:1px solid #ddd;background:#fff"></div>
  <svg class="abs" style="left:531px;top:299px" width="18" height="17" viewBox="0 0 18 17"><path d="M5.500 5.600h8M4.800 9.800h7.700" fill="none" stroke="#757575" stroke-width="1.800"/><path d="M12.600 2.500 16.800 5.600 12.600 8.700zM5.600 6.700 1.400 9.800 5.600 12.900z" fill="#757575"/></svg>
  <div class="abs" style="left:807.5px;top:291px;width:33px;height:33px;border-radius:50%;border:1px solid #ddd;background:#fff"></div>
  <svg class="abs" style="left:816.5px;top:300px" width="15" height="15" viewBox="0 0 15 15"><path d="M7.500 0v15M0 7.500h15" stroke="#616161" stroke-width="2"/></svg>
  <div class="abs" style="left:40px;top:366px;width:4px;height:22px;background:#1677ff"></div>
  <div class="abs" style="left:52px;top:365px;font-size:18.750px;line-height:26px;font-weight:700;color:#151515;white-space:nowrap">采购产品明细</div>
  <svg class="abs" style="left:1126.5px;top:368.79999999999995px" width="18" height="18" viewBox="0 0 18 18"><path d="M3 12l6-6 6 6" fill="none" stroke="#151515" stroke-width="2.300"/></svg>
  <div class="abs" style="left:40px;top:406px;width:1120px;height:1px;background:#d4d4d4"></div>
  <div class="abs" style="left:40px;top:449.5px;font-size:18.750px;line-height:26px;font-weight:700;color:#151515;white-space:nowrap">采购产品信息(3)</div>
  <div class="box" style="left:40px;top:485px;width:133px;height:45px"></div>
  <svg class="abs" style="left:63px;top:498.5px" width="16" height="16" viewBox="0 0 16 16"><path d="M8 .5v15M.500 8h15" stroke="#9e9e9e" stroke-width="2.100"/></svg>
  <div class="abs" style="left:87px;top:493px;font-size:16.250px;line-height:26px;font-weight:500;color:#151515;white-space:nowrap">添加一行</div>
  <div class="box" style="left:183px;top:485px;width:82px;height:45px"></div>
  <svg class="abs" style="left:199px;top:498px" width="16" height="16" viewBox="0 0 16 16"><path d="M8 1 2.200 7.200h3.500v4.300h4.600V7.200h3.500zM2 13.200h12v1.800H2z" fill="#757575"/></svg>
  <div class="abs" style="left:229px;top:497px;width:1px;height:19px;background:#ddd"></div>
  <svg class="abs" style="left:240px;top:502px" width="14" height="10" viewBox="0 0 14 10"><path d="M1 1.500h12L7 8.500z" fill="#9e9e9e"/></svg>
  <div class="abs" style="left:287px;top:496px;width:1px;height:22px;background:#ddd"></div>
  <div class="box" style="left:309px;top:485px;width:107px;height:45px"></div>
  <div class="abs" style="left:329.5px;top:493px;font-size:16.250px;line-height:26px;font-weight:500;color:#151515;white-space:nowrap">批量操作</div>
  <svg class="abs" style="left:1123px;top:498px" width="22" height="22" viewBox="0 0 22 22"><circle cx="9" cy="9" r="5.800" fill="none" stroke="#9e9e9e" stroke-width="2"/><path d="M13.400 13.400 19.500 19.500" stroke="#9e9e9e" stroke-width="2.600"/></svg>
  <div class="abs" style="left:40px;top:545px;width:1120px;height:43px;background:#fafafa;border-top:1px solid #ededed"></div>
  <div class="abs" style="left:321px;top:587px;width:839px;height:43px;background:#f5f5f5"></div>
  <div class="abs" style="left:321px;top:630px;width:839px;height:42px;background:#f5f5f5"></div>
  <div class="abs" style="left:321px;top:672px;width:839px;height:43px;background:#f5f5f5"></div>
  <div class="abs" style="left:41px;top:587.5px;width:2px;height:42.5px;background:#1677ff"></div>
  <div class="abs" style="left:40px;top:630px;width:1120px;height:1px;background:#e0e0e0"></div>
  <div class="abs" style="left:41px;top:630.5px;width:2px;height:41.5px;background:#1677ff"></div>
  <div class="abs" style="left:40px;top:672px;width:1120px;height:1px;background:#e0e0e0"></div>
  <div class="abs" style="left:41px;top:672.5px;width:2px;height:42.5px;background:#1677ff"></div>
  <div class="abs" style="left:40px;top:715px;width:1120px;height:1px;background:#e0e0e0"></div>
  <div class="abs" style="left:133px;top:546px;width:1px;height:169px;background:#e3e3e3"></div>
  <div class="abs" style="left:321px;top:546px;width:1px;height:169px;background:#e3e3e3"></div>
  <div class="abs" style="left:508px;top:546px;width:1px;height:169px;background:#e3e3e3"></div>
  <div class="abs" style="left:696px;top:546px;width:1px;height:169px;background:#e3e3e3"></div>
  <div class="abs" style="left:883px;top:546px;width:1px;height:169px;background:#e3e3e3"></div>
  <div class="abs" style="left:1071px;top:546px;width:1px;height:169px;background:#e3e3e3"></div>
  <div class="abs" style="left:40px;top:546px;width:1px;height:203px;background:#e8e8e8"></div>
  <div class="abs" style="left:1159px;top:546px;width:1px;height:203px;background:#e8e8e8"></div>
  <div class="abs" style="left:140.5px;top:555px;font-size:15px;line-height:20px;color:#f44336">*</div>
  <div class="abs" style="left:149px;top:554px;font-size:16.250px;line-height:26px;font-weight:700;color:#151515;white-space:nowrap">产品</div>
  <div class="abs" style="left:328px;top:554px;font-size:16.250px;line-height:26px;font-weight:700;color:#151515;white-space:nowrap">产品编号</div>
  <div class="abs" style="left:515px;top:554px;font-size:16.250px;line-height:26px;font-weight:700;color:#151515;white-space:nowrap">规格型号</div>
  <div class="abs" style="left:703px;top:554px;font-size:16.250px;line-height:26px;font-weight:700;color:#151515;white-space:nowrap">单位</div>
  <div class="abs" style="left:890px;top:554px;font-size:16.250px;line-height:26px;font-weight:700;color:#151515;white-space:nowrap;letter-spacing:-.3px">采购单价（含税）</div>
  <div class="abs" style="left:1077px;top:554px;font-size:16.250px;line-height:26px;font-weight:700;color:#151515;white-space:nowrap">税率%</div>
  <div class="abs" style="left:40px;top:595.5px;width:54px;text-align:center;font-size:16.250px;line-height:26px;color:#9e9e9e">1</div>
  <div class="abs" style="left:142px;top:596.0px;width:72.5px;height:26px;border-radius:4px;background:#e8f1fe"></div>
  <div class="abs" style="left:153.5px;top:595.5px;font-size:16.250px;line-height:26px;color:#151515;white-space:nowrap">半导体</div>
  <div class="abs" style="left:329px;top:595.5px;font-size:16.250px;line-height:26px;color:#151515;white-space:nowrap">CP0004</div>
  <div class="abs" style="left:516px;top:595.5px;font-size:16.250px;line-height:26px;color:#151515;white-space:nowrap">BDT01</div>
  <div class="abs" style="left:703px;top:595.5px;font-size:16.250px;line-height:26px;color:#151515;white-space:nowrap">块</div>
  <div class="abs" style="left:883px;top:595.5px;width:180px;text-align:right;font-size:16.250px;line-height:26px;color:#151515;white-space:nowrap">¥ 150.00</div>
  <div class="abs" style="left:40px;top:638.0px;width:54px;text-align:center;font-size:16.250px;line-height:26px;color:#9e9e9e">2</div>
  <div class="abs" style="left:142px;top:638.5px;width:72.5px;height:26px;border-radius:4px;background:#e8f1fe"></div>
  <div class="abs" style="left:153.5px;top:638.0px;font-size:16.250px;line-height:26px;color:#151515;white-space:nowrap">晶体管</div>
  <div class="abs" style="left:329px;top:638.0px;font-size:16.250px;line-height:26px;color:#151515;white-space:nowrap">CP0002</div>
  <div class="abs" style="left:516px;top:638.0px;font-size:16.250px;line-height:26px;color:#151515;white-space:nowrap">JTG01</div>
  <div class="abs" style="left:703px;top:638.0px;font-size:16.250px;line-height:26px;color:#151515;white-space:nowrap">根</div>
  <div class="abs" style="left:883px;top:638.0px;width:180px;text-align:right;font-size:16.250px;line-height:26px;color:#151515;white-space:nowrap">¥ 15.00</div>
  <div class="abs" style="left:40px;top:680.5px;width:54px;text-align:center;font-size:16.250px;line-height:26px;color:#9e9e9e">3</div>
  <div class="abs" style="left:142px;top:681.0px;width:90px;height:26px;border-radius:4px;background:#e8f1fe"></div>
  <div class="abs" style="left:153.5px;top:680.5px;font-size:16.250px;line-height:26px;color:#151515;white-space:nowrap">集成电路</div>
  <div class="abs" style="left:329px;top:680.5px;font-size:16.250px;line-height:26px;color:#151515;white-space:nowrap">CP0003</div>
  <div class="abs" style="left:516px;top:680.5px;font-size:16.250px;line-height:26px;color:#151515;white-space:nowrap">JCDL01</div>
  <div class="abs" style="left:703px;top:680.5px;font-size:16.250px;line-height:26px;color:#151515;white-space:nowrap">块</div>
  <div class="abs" style="left:883px;top:680.5px;width:180px;text-align:right;font-size:16.250px;line-height:26px;color:#151515;white-space:nowrap">¥ 35.00</div>
  <svg class="abs" style="left:58px;top:731px" width="16" height="16" viewBox="0 0 16 16"><path d="M8 .5v15M.500 8h15" stroke="#757575" stroke-width="1.600"/></svg>
  </div>
  <div class="abs" style="left:1192.5px;top:81.5px;width:7.500px;height:380px;border-radius:5px;background:#c9c9c9"></div>
  <div class="abs" style="left:39.5px;top:871px;width:23px;height:23px;border:1px solid #bdbdbd;border-radius:3px;background:#fff"></div>
  <div class="abs" style="left:72px;top:869px;font-size:16.250px;line-height:26px;color:#9e9e9e;white-space:nowrap">继续创建时，保留本次提交内容</div>
  <div class="abs" style="left:676px;top:859px;width:135px;height:46px;border-radius:4px;border:1px solid #bdbdbd;background:#fff;color:#151515;font-size:17.500px;line-height:45px;font-weight:700;text-align:center;white-space:nowrap">存草稿</div>
  <div class="abs" style="left:826px;top:859px;width:204px;height:46px;border-radius:4px;border:1px solid #bdbdbd;background:#fff;color:#151515;font-size:17.500px;line-height:45px;font-weight:700;text-align:center;white-space:nowrap">提交并继续创建</div>
  <div class="abs" style="left:1045px;top:859px;width:115px;height:46px;border-radius:4px;background:#304ce8;color:#fff;font-size:17.500px;line-height:46px;font-weight:700;text-align:center;white-space:nowrap">提交</div>
</div>
</body>
</html>
